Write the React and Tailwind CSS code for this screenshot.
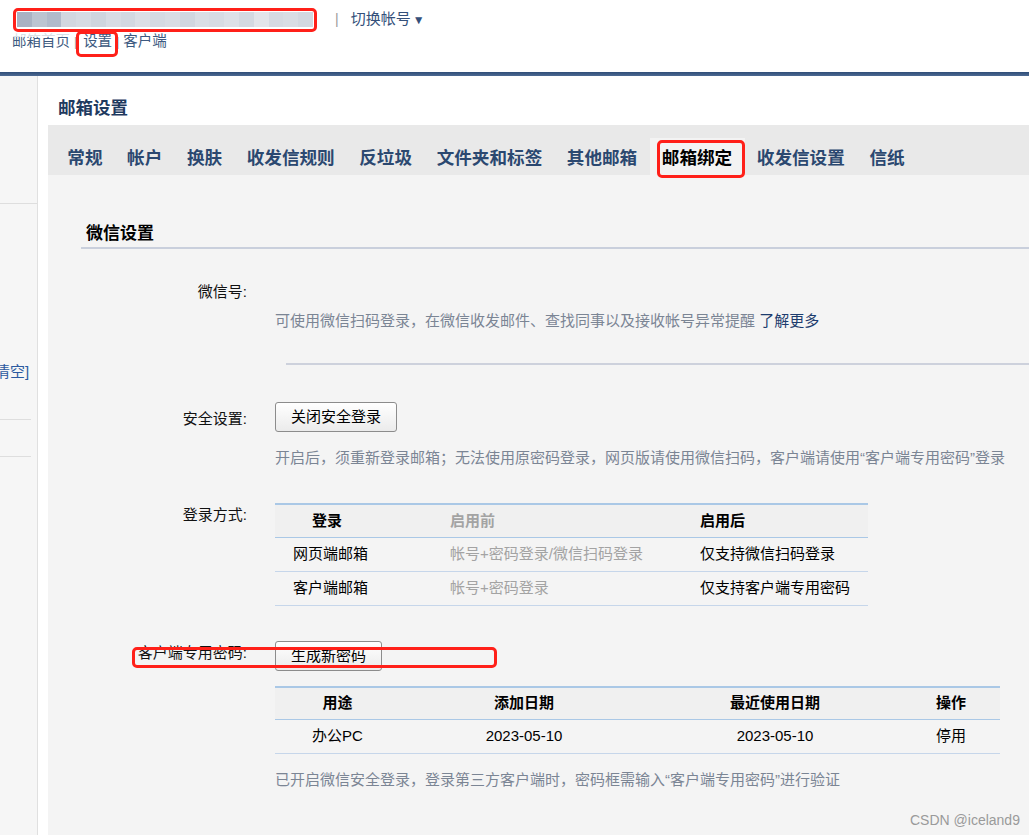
import React from "react"

const blur = ["#a9b2c3", "#bcc4d1", "#b1bacb", "#d2d7e0", "#d6dbe3", "#cfd5de", "#d8dce4", "#d3d8e1", "#dcdfe6", "#d5dae2", "#d9dde4", "#d1d6df", "#dadee5", "#d7dbe3", "#dde0e7", "#d4d9e1", "#e3e5ea", "#d6dae2", "#d9dde4", "#d3d8e0"]

const tabs = ["常规", "帐户", "换肤", "收发信规则", "反垃圾", "文件夹和标签", "其他邮箱", "邮箱绑定", "收发信设置", "信纸"]

function RedBox({ className }) {
  return <div className={"absolute border-[3px] border-[#ff2019] rounded-[5px] pointer-events-none " + className}></div>
}

function Btn({ children }) {
  return <div className="h-[30px] px-[15px] border border-[#8c8c8c] rounded-[3px] bg-gradient-to-b from-white to-[#ebebeb] text-[15px] leading-[28px] text-black">{children}</div>
}

function Row({ label, labelClass = "", children }) {
  return <div className="flex items-start">
    <div className={"w-[166px] text-right text-[15px] text-[#111] " + labelClass}>{label}</div>
    <div className="ml-[28px] flex-1">{children}</div>
  </div>
}

export default function App() {
  return <div className="relative h-[835px] w-[1029px] overflow-hidden bg-white font-['Liberation_Sans','Noto_Sans_CJK_SC',sans-serif]">
    {/* header */}
    <div className="h-[72px] pl-[12px]">
      <div className="flex items-center pt-[9px] h-[30px]">
        <div className="relative ml-[2px] w-[302px] h-[21px] p-[3px]">
          <div className="flex h-full">
            {blur.map((c, i) => <div key={i} className="flex-1" style={{ background: c }}></div>)}
          </div>
        </div>
        <span className="ml-[19px] text-[14px] text-[#9a9a9a]">|</span>
        <span className="ml-[12px] text-[15px] text-[#34507a]">切换帐号</span>
        <span className="ml-[2px] text-[12px] text-[#34507a]">▼</span>
      </div>
      <div className="relative flex items-center h-[22px] mt-[1px] text-[14.5px] text-[#3d5a80]">
        <span>邮箱首页</span>
        <span className="mx-[4px] text-[#999] text-[12px]">|</span>
        <span className="ml-[2px]">设置</span>
        <span className="mx-[4px] text-[#999] text-[12px]">|</span>
        <span>客户端</span>
        <div className="absolute left-[-4px] top-[-2px] w-[76px] h-[8px] bg-white/80"></div>
      </div>
    </div>
    <div className="h-[4px] bg-gradient-to-b from-[#2f4d78] to-[#4d6a92]"></div>

    <div className="flex h-[759px]">
      {/* sidebar */}
      <div className="w-[38px] bg-[#f6f6f6] border-r border-[#e0e0e0] overflow-hidden">
        <div className="h-[128px] border-b border-[#dedede]"></div>
        <div className="mt-[158px] ml-[-5px] text-[15px] leading-[20px] text-[#2c5aa0] whitespace-nowrap">清空]</div>
        <div className="mt-[37px] w-[31px] border-b border-[#dedede]"></div>
        <div className="mt-[36px] w-[31px] border-b border-[#dedede]"></div>
      </div>

      {/* main */}
      <div className="flex-1 pl-[10px] flex flex-col">
        <div className="h-[49px] pt-[21px] pl-[10px] text-[17.5px] leading-[22px] font-bold text-[#1f3a5f]">邮箱设置</div>
        <div className="h-[50px] bg-[#e9e9e9] pt-[13px] flex">
          <div className="w-[7px]"></div>
          {tabs.map(t => <div key={t} className={"h-[37px] px-[12.3px] pt-[2px] text-[17.6px] leading-[37px] font-bold whitespace-nowrap " + (t === "邮箱绑定" ? "bg-[#f3f3f3] text-black" : "text-[#2b4870]")}>{t}</div>)}
        </div>

        <div className="flex-1 bg-[#f4f4f4] pl-[33px]">
          <div className="h-[74px] flex items-end border-b-2 border-[#c9cfdc]">
            <div className="pl-[5px] pb-[2px] text-[17px] leading-[22px] font-bold text-black">微信设置</div>
          </div>

          <div className="mt-[33px]">
            <Row label="微信号:" labelClass="leading-[20px]">
              <div className="pt-[29px] text-[15px] leading-[20px] text-[#7b8594] whitespace-nowrap">
                可使用微信扫码登录，在微信收发邮件、查找同事以及接收帐号异常提醒 <span className="text-[#1d3c6e]">了解更多</span>
              </div>
            </Row>
          </div>
          <div className="ml-[205px] mt-[32px] h-[2px] bg-[#cdd1dc]"></div>

          <div className="mt-[37px]">
            <Row label="安全设置:" labelClass="pt-[2px] leading-[29px]">
              <div className="flex"><Btn>关闭安全登录</Btn></div>
              <div className="mt-[16px] text-[15px] leading-[20px] text-[#7b8594] whitespace-nowrap">
                开启后，须重新登录邮箱；无法使用原密码登录，网页版请使用微信扫码，客户端请使用“客户端专用密码”登录
              </div>
            </Row>
          </div>

          <div className="mt-[35px]">
            <Row label="登录方式:" labelClass="pt-[2px] leading-[20px]">
              <div className="w-[593px] text-[15px] border-t-2 border-[#aac8e6]">
                <div className="flex h-[33px] items-center bg-[#f0f0f0] border-b border-[#aac8e6] font-bold">
                  <div className="w-[175px] pl-[37px] text-black">登录</div>
                  <div className="w-[250px] text-[#a3a3a3]">启用前</div>
                  <div className="flex-1 text-black">启用后</div>
                </div>
                <div className="flex h-[34px] items-center border-b border-[#c6d6ea]">
                  <div className="w-[175px] pl-[18px] text-black">网页端邮箱</div>
                  <div className="w-[250px] text-[#a3a3a3] whitespace-nowrap">帐号+密码登录/微信扫码登录</div>
                  <div className="flex-1 text-black">仅支持微信扫码登录</div>
                </div>
                <div className="flex h-[34px] items-center border-b border-[#c6d6ea]">
                  <div className="w-[175px] pl-[18px] text-black">客户端邮箱</div>
                  <div className="w-[250px] text-[#a3a3a3]">帐号+密码登录</div>
                  <div className="flex-1 text-black">仅支持客户端专用密码</div>
                </div>
              </div>
            </Row>
          </div>

          <div className="mt-[35px]">
            <Row label="客户端专用密码:" labelClass="pt-[2px] leading-[20px] whitespace-nowrap">
              <div className="flex"><Btn>生成新密码</Btn></div>
              <div className="mt-[15px] w-[725px] text-[15px] border-t-2 border-[#aac8e6] text-center">
                <div className="flex h-[32px] items-center bg-[#f0f0f0] border-b border-[#aac8e6] font-bold text-black">
                  <div className="w-[125px]">用途</div>
                  <div className="w-[248px]">添加日期</div>
                  <div className="w-[254px]">最近使用日期</div>
                  <div className="flex-1">操作</div>
                </div>
                <div className="flex h-[34px] items-center border-b border-[#c6d6ea] text-black">
                  <div className="w-[125px]">办公PC</div>
                  <div className="w-[248px]">2023-05-10</div>
                  <div className="w-[254px]">2023-05-10</div>
                  <div className="flex-1">停用</div>
                </div>
              </div>
              <div className="mt-[16px] text-[15px] leading-[20px] text-[#7b8594] whitespace-nowrap">
                已开启微信安全登录，登录第三方客户端时，密码框需输入“客户端专用密码”进行验证
              </div>
            </Row>
          </div>
        </div>
      </div>
    </div>

    <div className="absolute left-[910px] top-[810px] text-[14px] leading-[20px] text-[#9a9a9a]">CSDN @iceland9</div>

    <RedBox className="left-[13px] top-[8px] w-[304px] h-[24px]" />
    <RedBox className="left-[76px] top-[31px] w-[42px] h-[26px]" />
    <RedBox className="left-[657px] top-[140px] w-[88px] h-[38px]" />
    <RedBox className="left-[132px] top-[647px] w-[365px] h-[21px]" />
  </div>
}
